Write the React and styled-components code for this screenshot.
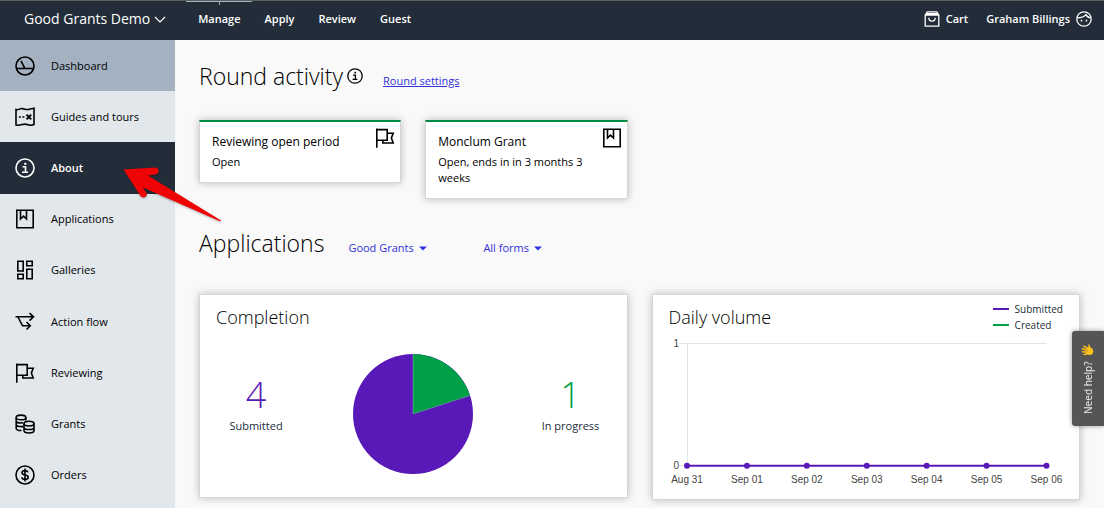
import React from 'react';
import styled, { createGlobalStyle } from 'styled-components';

const PURPLE = '#5819b8';
const GREEN = '#00a046';

const NAV_ITEMS = [
  { label: 'Dashboard', icon: 'dashboard', state: 'current' },
  { label: 'Guides and tours', icon: 'map' },
  { label: 'About', icon: 'info', state: 'selected' },
  { label: 'Applications', icon: 'bookmark' },
  { label: 'Galleries', icon: 'gallery' },
  { label: 'Action flow', icon: 'flow' },
  { label: 'Reviewing', icon: 'flag' },
  { label: 'Grants', icon: 'coins' },
  { label: 'Orders', icon: 'dollar' },
];

const TABS = ['Manage', 'Apply', 'Review', 'Guest'];

const DAYS = ['Aug 31', 'Sep 01', 'Sep 02', 'Sep 03', 'Sep 04', 'Sep 05', 'Sep 06'];

const ICONS = {
  dashboard: (
    <>
      <circle cx='10' cy='10' r='9' />
      <path d='M1.5 12.5H18.5M6 4.8L9.8 12.3' />
    </>
  ),
  map: (
    <>
      <path d='M1 2.6C3.5 3.4 5 1 7.5 1.6S12 3 14 2.4 17 1.8 19 1.2V17.4C17 18 16 18.6 14 18S10 16.6 7.5 17.4 3.5 18.8 1 18Z' />
      <path d='M3.8 10H5.8M7.4 10H9.4' />
      <path d='M11.5 7.6L16.2 12.4M16.2 7.6L11.5 12.4' strokeWidth='2' />
    </>
  ),
  info: (
    <>
      <circle cx='10' cy='10' r='9' />
      <path d='M7.5 8.8H10.5V14M7 14.2H13' />
      <path d='M10.3 4.8V6.8' strokeWidth='2.2' />
    </>
  ),
  bookmark: (
    <>
      <path d='M1.8 1.2H18.2V18.8H1.8Z' />
      <path d='M5.5 1.5V10L8.5 7.2L11.5 10V1.5' />
    </>
  ),
  gallery: (
    <path d='M2.8 1.3H8.2V11H2.8ZM11.8 1.3H17.2V5.8H11.8ZM11.8 9.2H17.2V18.8H11.8ZM2.8 14.2H8.2V18.8H2.8Z' />
  ),
  flow: (
    <>
      <path d='M0.5 4.8H18.5M14.5 1.2L18.5 4.8L14.5 8.6' />
      <path d='M3 5L7.5 13.8H15M11.5 10L15.3 13.8L11.5 17.5' />
    </>
  ),
  flag: (
    <path d='M1.8 0.5V19.8M1.8 1.6H12.2V12.2H1.8M12.5 5.2H18.2L16.4 10L18.2 15H7.8V12.5' />
  ),
  coins: (
    <>
      <ellipse cx='6' cy='3.4' rx='4.8' ry='2.3' />
      <path d='M1.2 3.4V14.2C1.2 15.6 3.5 16.5 6.5 16.5M1.2 7C1.2 8.4 3.5 9.3 8 8.8M1.2 10.6C1.2 12 3.5 12.9 8.5 12.6M10.8 3.4V6.5' />
      <ellipse cx='14' cy='9.6' rx='5' ry='2.4' />
      <path d='M9 9.6V16.6C9 18 11.2 19 14 19S19 18 19 16.6V9.6M9 13.2C9 14.6 11.2 15.5 14 15.5S19 14.6 19 13.2' />
    </>
  ),
  dollar: (
    <>
      <circle cx='10' cy='10' r='9' />
      <path d='M13 7.4C12.6 6 11.5 5.6 10 5.6C8.2 5.6 7 6.4 7 7.8C7 11 13.2 9 13.2 12.2C13.2 13.6 11.8 14.4 10 14.4C8.3 14.4 7.1 13.8 6.7 12.4M10 3.5V16.5' />
    </>
  ),
  cart: (
    <>
      <path d='M1.5 5L4 1.2H16L18.5 5V18.8H1.5ZM1.5 5H18.5M3 3.2H17' />
      <path d='M6 8.5C6 14 14 14 14 8.5' />
    </>
  ),
  face: (
    <>
      <circle cx='10' cy='10' r='9' />
      <path d='M1.5 8.5C6 8.5 10 7.5 12.5 4.5C13.8 7.2 16 8.5 18.5 8.5' />
      <path d='M6 12H7.8M12.2 12H14' strokeWidth='2.2' />
    </>
  ),
};

const Icon = ({ name, size = 20 }) => (
  <StIcon viewBox='0 0 20 20' width={size} height={size} aria-hidden='true'>
    {ICONS[name]}
  </StIcon>
);

const Caret = () => (
  <svg width='8' height='5' viewBox='0 0 8 5' aria-hidden='true'>
    <path d='M0 0.5H8L4 4.5Z' fill='currentColor' />
  </svg>
);

const Filter = ({ name, value }) => (
  <FilterLabel>
    <Select aria-label={name} defaultValue={value}>
      <option>{value}</option>
    </Select>
    <Caret />
  </FilterLabel>
);

const Pie = () => (
  <svg width='120' height='120' viewBox='0 0 120 120' role='img' aria-label='Completion'>
    <circle cx='60' cy='60' r='60' fill={PURPLE} />
    <path d='M60 60V0A60 60 0 0 1 117.06 41.46Z' fill={GREEN} />
    <path d='M60 0V60L117 41.5' fill='none' stroke='#fff' strokeOpacity='0.4' strokeWidth='0.6' />
  </svg>
);

const VolumeChart = () => {
  const x = (i) => 18 + i * 60 - i / 6;

  return (
    <Chart viewBox='0 0 394 162' role='img' aria-label='Daily volume'>
      <path d='M10 10.5H377M18.5 10V132M10 132.5H377' stroke='#e3e3e3' />
      <path d='M18 132.5H377' stroke={PURPLE} strokeWidth='2' />
      {DAYS.map((day, i) => (
        <g key={day}>
          <circle cx={x(i)} cy='132.5' r='3' fill={PURPLE} />
          <text x={x(i)} y='150' textAnchor='middle'>{day}</text>
        </g>
      ))}
      <text x='10' y='14' textAnchor='end'>1</text>
      <text x='10' y='136' textAnchor='end'>0</text>
    </Chart>
  );
};

const WavingHand = () => (
  <svg width='13' height='13' viewBox='0 0 13 13' aria-hidden='true'>
    <g fill='none' stroke='#fcc21b' strokeWidth='1.5' strokeLinecap='round'>
      <path d='M6 4.2L3 2.2M5.5 6L1.5 4.8M5.2 8L1.6 7.8M6.5 9.8L3 10.6' />
      <path d='M9 4L7.8 1.2' />
    </g>
    <path
      d='M6 3.5C8 2.5 10.5 3.4 11.8 5.5C13 8 11.5 11 8.8 11C6.8 11.2 5.2 10 4.8 8.5Z'
      fill='#fcc21b'
    />
    <path d='M5.5 5.2L7 6M5.2 7.2L7 7.5' stroke='#c78a10' strokeWidth='0.5' />
  </svg>
);

const App = () => {
  return (
    <>
      <GlobalStyle />
      <Header>
        <Brand type='button'>
          Good Grants Demo
          <svg width='12' height='7' viewBox='0 0 12 7' aria-hidden='true'>
            <path d='M1 1L6 6L11 1' fill='none' stroke='currentColor' strokeWidth='1.2' />
          </svg>
        </Brand>
        <Tabs>
          {TABS.map((tab) => (
            <Tab key={tab} href='#' $active={tab === 'Manage'}>
              {tab}
            </Tab>
          ))}
        </Tabs>
        <Account>
          <AccountLink href='#'>
            <Icon name='cart' size={16} />
            Cart
          </AccountLink>
          <AccountLink href='#'>
            Graham Billings
            <Icon name='face' size={16} />
          </AccountLink>
        </Account>
      </Header>
      <Body>
        <Sidebar>
          <NavList>
            {NAV_ITEMS.map(({ label, icon, state }) => (
              <NavLink key={label} href='#' $state={state}>
                <Icon name={icon} />
                {label}
              </NavLink>
            ))}
          </NavList>
        </Sidebar>
        <Main>
          <HeadingRow>
            <Heading>
              Round activity
              <Icon name='info' size={16} />
            </Heading>
            <TextLink href='#'>Round settings</TextLink>
          </HeadingRow>
          <RoundGrid>
            <RoundCard>
              <div>
                <RoundTitle>Reviewing open period</RoundTitle>
                <RoundText>Open</RoundText>
              </div>
              <Icon name='flag' />
            </RoundCard>
            <RoundCard>
              <div>
                <RoundTitle>Monclum Grant</RoundTitle>
                <RoundText>Open, ends in in 3 months 3 weeks</RoundText>
              </div>
              <Icon name='bookmark' />
            </RoundCard>
          </RoundGrid>
          <HeadingRow>
            <Heading>Applications</Heading>
            <Filters>
              <Filter name='Programme' value='Good Grants' />
              <Filter name='Form' value='All forms' />
            </Filters>
          </HeadingRow>
          <ChartGrid>
            <ChartCard>
              <ChartTitle>Completion</ChartTitle>
              <Completion>
                <Stat>
                  <StatValue $color={PURPLE}>4</StatValue>
                  Submitted
                </Stat>
                <Pie />
                <Stat>
                  <StatValue $color={GREEN}>1</StatValue>
                  In progress
                </Stat>
              </Completion>
            </ChartCard>
            <ChartCard>
              <ChartHeader>
                <ChartTitle>Daily volume</ChartTitle>
                <Legend>
                  <LegendItem $color={PURPLE}>Submitted</LegendItem>
                  <LegendItem $color={GREEN}>Created</LegendItem>
                </Legend>
              </ChartHeader>
              <VolumeChart />
            </ChartCard>
          </ChartGrid>
        </Main>
      </Body>
      <Pointer viewBox='0 0 100 56' aria-hidden='true'>
        <path
          d='M2.5 4.5L34 2.5C38.5 2.5 39 9 34.5 9.5L27 10.5L100 55.5L99.5 56.5L22 22.5L25.5 28C27.5 32 21.5 34 19.5 31Z'
          fill='#ee0404'
        />
      </Pointer>
      <HelpTab type='button'>
        Need help?
        <WavingHand />
      </HelpTab>
    </>
  );
};

export default App;

const GlobalStyle = createGlobalStyle`
  * {
    box-sizing: border-box;
  }

  body {
    margin: 0;
    background: #f9f9f9;
    color: #000;
    font-family: 'Open Sans', sans-serif;
    font-size: 11px;
    line-height: 16px;
  }

  button, select {
    padding: 0;
    border: 0;
    background: none;
    color: inherit;
    font: inherit;
    cursor: pointer;
  }

  a {
    color: inherit;
    text-decoration: none;
  }

  h1, h2, h3, p {
    margin: 0;
    font-weight: 400;
  }
`;

const StIcon = styled.svg`
  flex: none;
  fill: none;
  stroke: currentColor;
  stroke-width: 1.6;
`;

const Header = styled.header`
  display: flex;
  height: 40px;
  padding: 0 12px 0 24px;
  border-top: 1px solid #5c5c5c;
  background: #222d39;
  color: #fff;
`;

const Brand = styled.button`
  display: flex;
  align-items: center;
  gap: 4px;
  margin-right: 20px;
  padding-bottom: 3px;
  font-size: 14px;
`;

const Tabs = styled.nav`
  display: flex;
  flex: 1;
  gap: 1px;
`;

const Tab = styled.a`
  position: relative;
  display: flex;
  align-items: center;
  padding: 0 11px 4px 12px;
  border-top: 1px solid ${({ $active }) => ($active ? '#a3b1c0' : 'transparent')};
  font-weight: 600;

  &::after {
    content: '';
    position: absolute;
    top: 0;
    left: 50%;
    width: 1px;
    height: 3px;
    background: ${({ $active }) => ($active ? '#a3b1c0' : 'transparent')};
  }
`;

const Account = styled.div`
  display: flex;
  gap: 18px;
  padding-bottom: 3px;
`;

const AccountLink = styled.a`
  display: flex;
  align-items: center;
  gap: 6px;
  font-weight: 600;
`;

const Body = styled.div`
  display: flex;
  min-height: calc(100vh - 40px);
`;

const Sidebar = styled.aside`
  flex: none;
  width: 175px;
  background: #e1e7eb;
`;

const NavList = styled.nav`
  display: grid;
  grid-auto-rows: 1fr;
  min-height: 461px;
`;

const NAV_BG = { current: '#a3b1c0', selected: '#222d39' };

const NavLink = styled.a`
  display: flex;
  align-items: center;
  gap: 16px;
  padding: 0 15px;
  background: ${({ $state }) => NAV_BG[$state] || 'transparent'};
  color: ${({ $state }) => ($state === 'selected' ? '#fff' : '#000')};
  font-weight: ${({ $state }) => ($state === 'selected' ? 600 : 400)};
`;

const Main = styled.main`
  flex: 1;
  min-width: 0;
  padding: 20px 24px 8px;
`;

const HeadingRow = styled.div`
  display: flex;
  align-items: baseline;
  gap: 20px;
`;

const Heading = styled.h1`
  display: flex;
  align-items: center;
  gap: 4px;
  font-size: 23px;
  font-weight: 300;
  line-height: 32px;
`;

const TextLink = styled.a`
  color: #3232dc;
  text-decoration: underline;
`;

const Filters = styled.div`
  display: flex;
  gap: 56px;
  padding-left: 4px;
`;

const FilterLabel = styled.label`
  display: flex;
  align-items: center;
  gap: 5px;
  color: #3232dc;
`;

const Select = styled.select`
  appearance: none;
`;

const CardGrid = styled.div`
  display: grid;
  grid-template-columns: repeat(4, 1fr);
  align-items: start;
  gap: 24px;
`;

const RoundGrid = styled(CardGrid)`
  padding: 28px 0;
`;

const ChartGrid = styled(CardGrid)`
  padding-top: 35px;
`;

const Card = styled.section`
  border: 1px solid #d6d6d6;
  background: #fff;
  box-shadow: 0 0 8px rgba(0, 0, 0, 0.25);
`;

const RoundCard = styled(Card)`
  display: flex;
  justify-content: space-between;
  padding: 6px 5px 12px 12px;
  border-top: 2px solid #008c46;
`;

const RoundTitle = styled.h2`
  padding-top: 4px;
  font-size: 12px;
  line-height: 20px;
`;

const RoundText = styled.p`
  padding-top: 2px;
`;

const ChartCard = styled(Card)`
  grid-column: span 2;
  padding: 6px 16px 4px;
`;

const ChartHeader = styled.div`
  display: flex;
  justify-content: space-between;
`;

const ChartTitle = styled.h2`
  font-size: 18px;
  font-weight: 300;
  line-height: 32px;
`;

const Completion = styled.div`
  display: flex;
  align-items: center;
  justify-content: space-between;
  padding: 21px 0 19px;
`;

const Stat = styled.div`
  width: 80px;
  padding-bottom: 22px;
  color: #222d39;
  text-align: center;
`;

const StatValue = styled.div`
  color: ${({ $color }) => $color};
  font-size: 36px;
  font-weight: 300;
  line-height: 46px;
`;

const Legend = styled.div`
  display: flex;
  flex-direction: column;
`;

const LegendItem = styled.div`
  display: flex;
  align-items: center;
  gap: 6px;
  color: #222d39;
  font-size: 10px;

  &::before {
    content: '';
    width: 16px;
    height: 2px;
    background: ${({ $color }) => $color};
  }
`;

const Chart = styled.svg`
  display: block;
  width: 100%;

  text {
    fill: #444;
    font-family: 'Liberation Sans', sans-serif;
    font-size: 10px;
  }
`;

const Pointer = styled.svg`
  position: absolute;
  top: 165px;
  left: 121px;
  width: 100px;
  height: 56px;
  filter: drop-shadow(0 1px 1px rgba(0, 0, 0, 0.3));
`;

const HelpTab = styled.button`
  position: fixed;
  top: 331px;
  right: 0;
  display: flex;
  align-items: center;
  gap: 4px;
  width: 32px;
  height: 95px;
  padding: 12px 10px;
  border-radius: 0 3px 3px 0;
  background: #555;
  box-shadow: 0 0 5px rgba(0, 0, 0, 0.4);
  color: #e8e8e8;
  font-family: 'Noto Sans', sans-serif;
  font-size: 10px;
  line-height: 12px;
  white-space: nowrap;
  writing-mode: vertical-rl;
  transform: rotate(180deg);

  svg {
    flex: none;
    transform: rotate(180deg);
  }
`;
